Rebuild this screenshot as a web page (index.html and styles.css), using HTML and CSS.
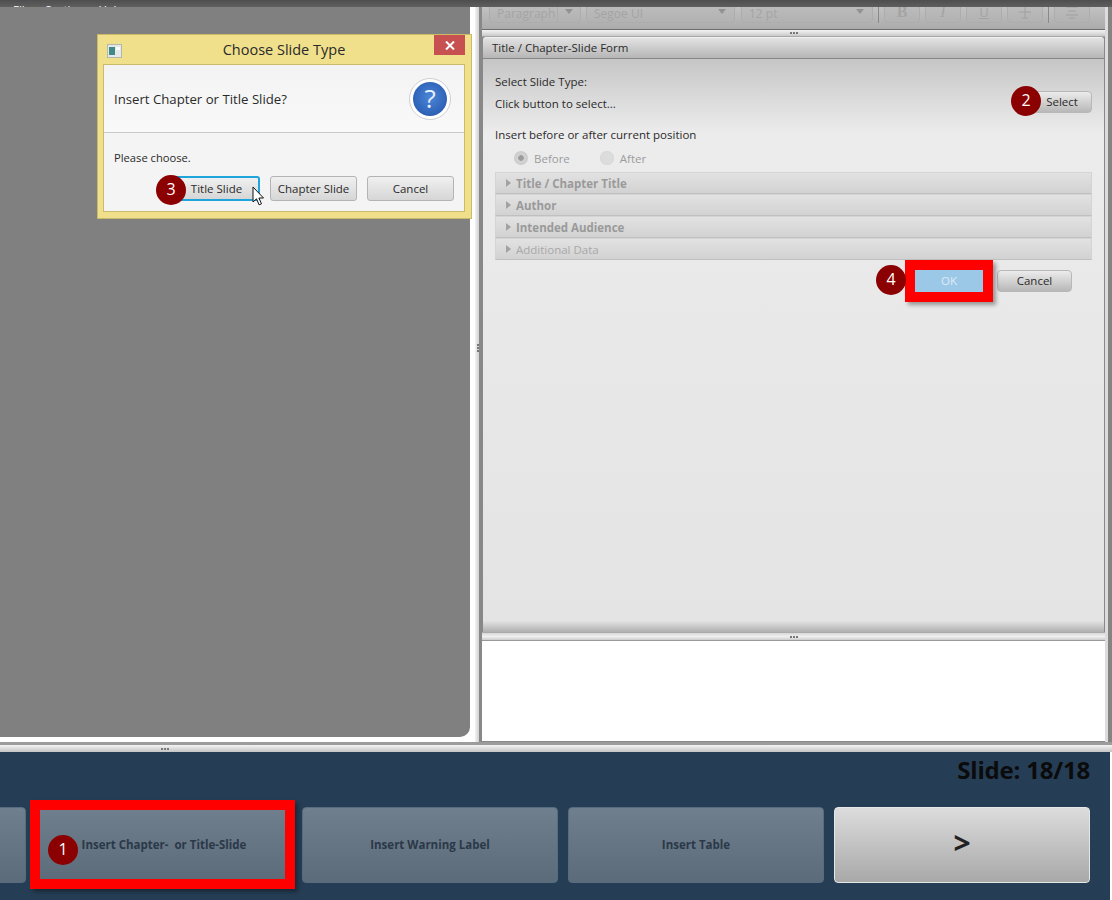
FILE: index.html
```html
<!DOCTYPE html>
<html lang="en">
<head>
  <meta charset="UTF-8" />
  <meta name="viewport" content="width=device-width, initial-scale=1.0"/>
  <title>Choose Slide Type</title>
  <link rel="stylesheet" href="styles.css">
</head>
<body>
<div class="app">

  <div class="topbar">
    <span>File</span><span>Section</span><span>Help</span>
  </div>

  <div class="main">
    <div class="stage">
      <div class="stage-view"></div>
    </div>

    <div class="vsplit"><i></i><i></i><i></i></div>

    <div class="right">
      <div class="toolbar">
        <div class="combo combo-para"><span>Paragraph</span><b></b></div>
        <div class="combo combo-font"><span>Segoe UI</span><b></b></div>
        <div class="combo combo-size"><span>12 pt</span><b></b></div>
        <div class="sep"></div>
        <div class="tool tool-b">B</div>
        <div class="tool tool-i">I</div>
        <div class="tool tool-u">U</div>
        <div class="tool tool-s">
          <svg width="14" height="14" viewBox="0 0 14 14"><path d="M1 7h12M7 1v12M4 1h6M4 13h6" stroke="#a0a0a0" fill="none"/></svg>
        </div>
        <div class="sep"></div>
        <div class="tool">
          <svg width="14" height="14" viewBox="0 0 14 14"><path d="M1 2h12M3 6h8M1 10h12M4 13h6" stroke="#a0a0a0" fill="none"/></svg>
        </div>
      </div>
      <div class="hsplit hsplit-small"><i></i><i></i><i></i></div>

      <section class="pane">
        <div class="pane-title">Title / Chapter-Slide Form</div>
        <div class="form">
          <div class="type-row">
            <div>
              <div class="line">Select Slide Type:</div>
              <div class="line">Click button to select...</div>
            </div>
            <button class="btn btn-select">Select</button>
          </div>
          <div class="line insert-line">Insert before or after current position</div>
          <div class="radios">
            <span class="radio checked">Before</span>
            <span class="radio">After</span>
          </div>
          <ul class="accordion">
            <li>Title / Chapter Title</li>
            <li>Author</li>
            <li>Intended Audience</li>
            <li class="plain">Additional Data</li>
          </ul>
          <div class="actions">
            <button class="btn btn-ok">OK</button>
            <button class="btn btn-cancel">Cancel</button>
          </div>
        </div>
      </section>

      <div class="hsplit hsplit-notes"><i></i><i></i><i></i></div>
      <div class="notes"></div>
    </div>

    <div class="gutter"></div>
  </div>

  <div class="hsplit hsplit-main"><i></i><i></i><i></i></div>

  <div class="bottom">
    <div class="slide-count">Slide: 18/18</div>
    <div class="bottom-buttons">
      <button class="big"></button>
      <button class="big">Insert Chapter-&nbsp; or Title-Slide</button>
      <button class="big">Insert Warning Label</button>
      <button class="big">Insert Table</button>
      <button class="big next">&gt;</button>
    </div>
  </div>

  <!-- dialog window -->
  <div class="dialog">
    <div class="dialog-title">
      <svg class="win-icon" width="15" height="14" viewBox="0 0 15 14">
        <rect x="0.5" y="0.5" width="14" height="13" fill="#e4e8ea" stroke="#b4b8a8"/>
        <rect x="2" y="3" width="6" height="8" fill="#3f8a86"/>
        <rect x="9" y="3" width="4" height="3" fill="#fff"/>
      </svg>
      <span>Choose Slide Type</span>
      <div class="close">
        <svg width="10" height="9" viewBox="0 0 10 9"><path d="M1 .5l8 8M9 .5l-8 8" stroke="#fff" stroke-width="2" fill="none"/></svg>
      </div>
    </div>
    <div class="dialog-body">
      <div class="dialog-head">
        <span>Insert Chapter or Title Slide?</span>
        <svg width="42" height="42" viewBox="0 0 42 42">
          <defs>
            <radialGradient id="qblue" cx="50%" cy="45%" r="55%">
              <stop offset="0" stop-color="#4a86d8"/>
              <stop offset="1" stop-color="#2c5fb4"/>
            </radialGradient>
          </defs>
          <circle cx="21" cy="21" r="20.5" fill="#fff" stroke="#cfcfcf"/>
          <circle cx="21" cy="21" r="17" fill="url(#qblue)"/>
          <text x="21" y="30" text-anchor="middle" class="q-mark">?</text>
        </svg>
      </div>
      <div class="dialog-foot">
        <div class="please">Please choose.</div>
        <div class="dialog-buttons">
          <button class="dbtn focused">Title Slide</button>
          <button class="dbtn wide">Chapter Slide</button>
          <button class="dbtn wide">Cancel</button>
        </div>
      </div>
    </div>
  </div>

  <!-- tutorial annotations -->
  <div class="frame frame-ok"></div>
  <div class="frame frame-insert"></div>
  <div class="badge badge-1">1</div>
  <div class="badge badge-2">2</div>
  <div class="badge badge-3">3</div>
  <div class="badge badge-4">4</div>

  <svg class="cursor" width="13" height="21" viewBox="0 0 13 21">
    <path d="M1 1v15l3.5-3.2 2.6 6 2.4-1-2.6-5.8h4.6z" fill="#fff" stroke="#111" stroke-width="1"/>
  </svg>
</div>
</body>
</html>
```

FILE: styles.css
```css
* {
  box-sizing: border-box;
}
body {
  margin: 0;
  font-family: "Open Sans", "Noto Sans", sans-serif;
  font-size: 11.5px;
  color: #2a2a2a;
  background: #fff;
}
button {
  font-family: inherit;
  padding: 0;
}
.app {
  position: relative;
  width: 1112px;
  height: 900px;
  overflow: hidden;
  display: flex;
  flex-direction: column;
}

/* top strip */
.topbar {
  height: 7px;
  flex: none;
  overflow: hidden;
  padding: 4px 0 0 13px;
  display: flex;
  gap: 14px;
  color: #fff;
  line-height: 12px;
  background: linear-gradient(#4e4e4e, #5f5f5f);
}

.main {
  height: 735px;
  flex: none;
  display: flex;
}
.stage {
  width: 475px;
  flex: none;
  background: #fff;
}
.stage-view {
  width: 470px;
  height: 730px;
  background: #808080;
  border-bottom-right-radius: 10px;
}
.vsplit {
  width: 7px;
  flex: none;
  display: flex;
  flex-direction: column;
  align-items: center;
  justify-content: center;
  gap: 1px;
  padding: 0 1px 54px 0;
  background: linear-gradient(90deg, #f2f2f2, #d0d0d0 60%, #888 60%, #888);
}
.vsplit i, .hsplit i {
  display: block;
  width: 2px;
  height: 2px;
  background: #777;
}

.right {
  width: 623px;
  flex: none;
  display: flex;
  flex-direction: column;
  background: #888;
}
.gutter {
  flex: 1;
  background: linear-gradient(90deg, #dcdcdc 3px, #848484 3px);
}

/* faded editor toolbar */
.toolbar {
  height: 23px;
  flex: none;
  display: flex;
  align-items: flex-end;
  gap: 5px;
  padding: 0 0 6px 7px;
  border-bottom: 1px solid #6c6c6c;
  background: linear-gradient(#c2c2c2, #ababab);
  color: #a4a4a4;
  overflow: hidden;
}
.combo {
  height: 25px;
  flex: none;
  display: flex;
  align-items: center;
  justify-content: space-between;
  padding: 6px 0 0 7px;
  border: 1px solid #adadad;
  border-radius: 4px;
  font-size: 12px;
  background: linear-gradient(#c0c0c0, #b2b2b2);
}
.combo b {
  width: 23px;
  height: 100%;
  border-left: 1px solid #adadad;
  position: relative;
}
.combo b::after {
  content: "";
  position: absolute;
  left: 7px;
  top: 4px;
  border: 4px solid transparent;
  border-top: 5px solid #929292;
}
.combo-para { width: 92px; }
.combo-font { width: 149px; }
.combo-size { width: 132px; margin-left: 1px; }
.combo-font b, .combo-size b { border-left: none; }
.sep {
  width: 1px;
  height: 22px;
  flex: none;
  background: #8a8a8a;
}
.tool {
  width: 36px;
  height: 25px;
  flex: none;
  display: flex;
  align-items: center;
  justify-content: center;
  padding-top: 2px;
  border: 1px solid #adadad;
  border-radius: 4px;
  background: linear-gradient(#c0c0c0, #b2b2b2);
  font: bold 16px "Liberation Serif", serif;
}
.tool-i { font-style: italic; font-weight: normal; }
.tool-u { text-decoration: underline; font-weight: normal; font-family: "Open Sans", sans-serif; font-size: 13px; }

/* splitters */
.hsplit {
  flex: none;
  display: flex;
  justify-content: center;
  align-items: center;
  gap: 1px;
  background: linear-gradient(#f4f4f4, #c9c9c9);
}
.hsplit-small { height: 7px; border-bottom: 1px solid #a8a8a8; }
.hsplit-notes { height: 9px; border-top: 1px solid #aaa; border-bottom: 1px solid #999; background: linear-gradient(#d8d8d8, #f0f0f0 50%, #ccc); }
.hsplit-main {
  height: 10px;
  width: 100%;
  border-top: 3px solid #9c9c9c;
  background: linear-gradient(#f4f4f4, #c4c4c4);
}
.hsplit-main i { position: relative; left: -391px; }

/* titled pane */
.pane {
  height: 595px;
  flex: none;
  display: flex;
  flex-direction: column;
  margin: 0 1px 0 1px;
}
.pane-title {
  height: 22px;
  flex: none;
  padding: 0 9px;
  line-height: 19px;
  border-top: 1px solid #f0f0f0;
  border-bottom: 1px solid #888;
  border-radius: 3px 3px 0 0;
  background: linear-gradient(#e2e2e2, #b6b6b6);
}
.form {
  flex: 1;
  padding: 12px 12px 0;
  background: linear-gradient(#c6c6c6, #ececec 13%, #e8e8e8 50%, #e4e4e4 98%, #b0b0b0);
}
.line {
  height: 22px;
  line-height: 22px;
}
.type-row {
  display: flex;
  justify-content: space-between;
  align-items: flex-end;
}
.insert-line {
  margin-top: 9px;
}
.radios {
  height: 22px;
  margin-top: 1px;
  padding-left: 19px;
  display: flex;
  align-items: center;
  gap: 30px;
  color: #9c9c9c;
}
.radio {
  display: flex;
  align-items: center;
  gap: 6px;
}
.radio::before {
  content: "";
  width: 14px;
  height: 14px;
  border-radius: 50%;
  background: radial-gradient(circle, #dcdcdc 55%, #c6c6c6);
}
.radio.checked::before {
  background: radial-gradient(circle, #9c9c9c 25%, #d4d4d4 32%, #c4c4c4);
}
.accordion {
  list-style-type: none;
  margin: 3px 0 0;
  padding: 0;
}
.accordion li {
  height: 22px;
  padding-left: 20px;
  line-height: 21px;
  font-weight: bold;
  color: #9a9a9a;
  border: 1px solid #d4d4d4;
  border-bottom-color: #c0c0c0;
  background: linear-gradient(#e2e2e2, #d2d2d2);
  position: relative;
}
.accordion li::before {
  content: "";
  position: absolute;
  left: 10px;
  top: 6px;
  border: 4px solid transparent;
  border-left: 5px solid #a2a2a2;
}
.accordion li.plain {
  font-weight: normal;
  color: #a8a8a8;
}
.actions {
  margin: 10px 20px 0 0;
  display: flex;
  justify-content: flex-end;
  gap: 13px;
}
.btn {
  height: 22px;
  padding-bottom: 2px;
  border: 1px solid #b8b8b8;
  border-radius: 4px;
  font-size: 11.5px;
  color: #2a2a2a;
  background: linear-gradient(#ececec, #b8b8b8);
}
.btn-select {
  width: 62px;
  margin-bottom: 2px;
  padding-left: 2px;
}
.btn-cancel {
  width: 75px;
}
.btn-ok {
  width: 70px;
  color: #dcebf6;
  border: none;
  border-radius: 0;
  background: #9cc8e8;
}
.notes {
  height: 100px;
  flex: none;
  background: #fff;
  margin: 0 0 1px;
}

/* navy bar */
.bottom {
  flex: 1;
  margin-right: 2px;
  background: #253e55;
  padding: 4px 20px 0 0;
}
.slide-count {
  height: 51px;
  line-height: 28px;
  text-align: right;
  font-size: 24px;
  font-weight: bold;
  letter-spacing: -0.2px;
  color: #0b0b0b;
}
.bottom-buttons {
  display: flex;
  justify-content: flex-end;
  gap: 10px;
}
.big {
  width: 256px;
  height: 76px;
  flex: none;
  padding-bottom: 2px;
  border: 1px solid #586c80;
  border-radius: 4px;
  font-size: 11.5px;
  font-weight: bold;
  color: #2b3848;
  background: linear-gradient(#707f8e, #5b6b79);
}
.big.next {
  padding-bottom: 5px;
  border-color: #e6e6e6;
  font-size: 30px;
  color: #222;
  background: linear-gradient(#dcdcdc, #a8a8a8);
}

/* dialog */
.dialog {
  position: absolute;
  left: 97px;
  top: 34px;
  width: 375px;
  height: 185px;
  display: flex;
  flex-direction: column;
  padding: 0 6px 6px 5px;
  border: 1px solid #c9bb68;
  background: #f0e08c;
}
.dialog-title {
  height: 29px;
  flex: none;
  display: grid;
  grid-template-columns: 1fr auto 1fr;
  align-items: center;
  font-size: 14.5px;
  color: #2a2a2a;
}
.win-icon {
  margin: 2px 0 0 4px;
}
.close {
  justify-self: end;
  align-self: start;
  width: 31px;
  height: 20px;
  display: flex;
  align-items: center;
  justify-content: center;
  background: #c75050;
}
.dialog-body {
  flex: 1;
  display: flex;
  flex-direction: column;
  border: 1px solid #c9bb68;
  background: #f4f4f4;
}
.dialog-head {
  height: 68px;
  flex: none;
  display: flex;
  align-items: center;
  justify-content: space-between;
  padding: 0 13px 0 10px;
  border-bottom: 1px solid #c8c8c8;
  font-size: 13.2px;
  background: linear-gradient(#f3f3f3, #f9f9f9);
}
.q-mark {
  font: 26px "Open Sans", sans-serif;
  fill: #e8f0fa;
}
.dialog-foot {
  padding: 16px 10px 0;
}
.please {
  line-height: 18px;
  font-size: 11.2px;
}
.dialog-buttons {
  margin-top: 9px;
  display: flex;
  justify-content: flex-end;
  gap: 10px;
}
.dbtn {
  width: 87px;
  height: 25px;
  border: 1px solid #b4b4b4;
  border-radius: 3px;
  font-size: 11.5px;
  color: #2a2a2a;
  background: linear-gradient(#f0f0f0, #d6d6d6);
}
.dbtn.focused {
  width: 85px;
  padding-right: 2px;
  border: 2px solid #1ea5dc;
}

/* annotations */
.frame {
  position: absolute;
  border: 10px solid #ff0000;
  box-shadow: 3px 3px 4px rgba(0,0,0,0.35);
}
.frame-insert {
  left: 30px;
  top: 800px;
  width: 265px;
  height: 89px;
}
.frame-ok {
  left: 905px;
  top: 260px;
  width: 88px;
  height: 42px;
}
.badge {
  position: absolute;
  width: 30px;
  height: 30px;
  border-radius: 50%;
  background: #8b0000;
  color: #fff;
  font-size: 16px;
  line-height: 29px;
  text-align: center;
}
.badge-1 { left: 48px; top: 835px; }
.badge-2 { left: 1011px; top: 86px; }
.badge-3 { left: 156px; top: 175px; }
.badge-4 { left: 876px; top: 265px; }
.cursor {
  position: absolute;
  left: 252px;
  top: 186px;
}
```
